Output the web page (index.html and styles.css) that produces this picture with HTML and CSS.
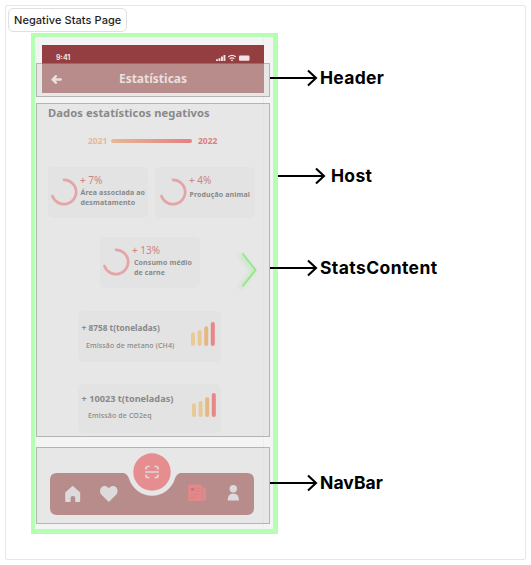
FILE: index.html
```html
<!DOCTYPE html>
<html lang="pt">
<head>
<meta charset="utf-8">
<title>Negative Stats Page</title>
<link rel="stylesheet" href="styles.css">
</head>
<body>
<svg class="defs" width="0" height="0">
  <symbol id="ring" viewBox="0 0 28 28"><path d="M14 1.8A12.200 12.200 0 1 1 2.500 18.100" fill="none" stroke="#e3a5a5" stroke-width="2.700" stroke-linecap="round"/></symbol>
  <symbol id="arrow" viewBox="0 0 48 18"><path d="M0 9H46M38 1.5L46 9L38 16.5" fill="none" stroke="#000" stroke-width="2.100"/></symbol>
  <symbol id="bars" viewBox="0 0 24 24"><g fill="none" stroke-width="4" stroke-linecap="round"><path d="M2 12.3V22" stroke="#e9ca97"/><path d="M8.6 10V22" stroke="#e8c995"/><path d="M15.2 6.3V22" stroke="#e5b783"/><path d="M21.8 2V22" stroke="#e78788"/></g></symbol>
</svg>
<main class="canvas">
  <div class="page-label">Negative Stats Page</div>
  <div class="host">
    <div class="status">
      <span>9:41</span>
      <svg width="34" height="8" viewBox="0 0 34 8" fill="#f1e3e3"><path d="M0 5.300h1.900V7H0zM2.500 4.200h1.900V7H2.500zM5 2.500h1.900V7H5zM7.500 1h1.900v6H7.500z"/><path d="M12.200 2.900Q16 -.2 19.800 2.900M13.800 4.700Q16 3 18.200 4.700" fill="none" stroke="#f1e3e3" stroke-width="1.300"/><path d="M14.600 5.700h2.800L16 7.400z"/><rect x="23" y="1.400" width="10.500" height="5.400" rx="1"/></svg>
    </div>
    <header class="zone header">
      <div class="titlebar">
        <svg width="11" height="9" viewBox="0 0 11 9"><path d="M9.800 4.500H2M5 1.200L1.500 4.500L5 7.800" fill="none" stroke="#e9dfdf" stroke-width="2.300" stroke-linecap="round" stroke-linejoin="round"/></svg>
        <h1>Estatísticas</h1>
      </div>
    </header>
    <section class="zone content">
      <h2>Dados estatísticos negativos</h2>
      <div class="years"><span class="from">2021</span><i></i><span class="to">2022</span></div>
      <div class="pair">
        <div class="card"><svg class="ring"><use href="#ring"/></svg><div><b>+ 7%</b><p>Área associada ao<br>desmatamento</p></div></div>
        <div class="card one"><svg class="ring"><use href="#ring"/></svg><div><b>+ 4%</b><p>Produção animal</p></div></div>
      </div>
      <div class="middle">
        <div class="card third"><svg class="ring"><use href="#ring"/></svg><div><b>+ 13%</b><p>Consumo médio<br>de carne</p></div></div>
        <svg class="next" width="26" height="44" viewBox="0 0 26 44"><path d="M6.500 5.500L19.500 22L6.500 38.500" fill="none" stroke="#93e58d" stroke-width="1.800"/></svg>
      </div>
      <div class="total methane"><div><strong>+ 8758 t(toneladas)</strong><p>Emissão de metano (CH4)</p></div><svg class="bars"><use href="#bars"/></svg></div>
      <div class="total carbon"><div><strong>+ 10023 t(toneladas)</strong><p>Emissão de CO2eq</p></div><svg class="bars"><use href="#bars"/></svg></div>
    </section>
    <nav class="zone nav">
      <svg width="234" height="77" viewBox="36 447 234 77">
        <path d="M57 473H122.500C126 473 128 475.500 129 478.500A24 24 0 0 0 175 478.500C176 475.500 178 473 181.500 473H247Q254 473 254 480V508Q254 515 247 515H57Q50 515 50 508V480Q50 473 57 473Z" fill="#b78c8b"/>
        <circle cx="152" cy="472" r="18.700" fill="#e68e8f"/>
        <path d="M146 469.500V468.500Q146 466.500 148 466.500H149.500M154.500 466.500H156Q158 466.500 158 468.500V469.500M146 474.500V475.500Q146 477.500 148 477.500H149.500M154.500 477.500H156Q158 477.500 158 475.500V474.500M145.200 472H158.800" fill="none" stroke="#e4d6d6" stroke-width="1.700"/>
        <path d="M65.200 492.500L72.100 486.200Q72.700 485.700 73.300 486.200L80.200 492.500V501Q80.200 502 79.200 502H75.200V497.500Q75.200 496 72.900 496Q70.600 496 70.600 497.500V502H66.200Q65.200 502 65.200 501Z" fill="#dcdadb"/>
        <path d="M108.800 502L101.500 494.800C98.800 492 100 486.500 104 486C106.500 485.800 107.900 487 108.800 488.400C109.700 487 111.200 485.800 113.600 486C117.700 486.500 118.800 492 116.100 494.800Z" fill="#dcdadb"/>
        <path d="M190 484.500H200.500Q202 484.500 202 486V501H190Q188.300 501 188.300 499.500V486Q188.300 484.500 190 484.500ZM202.600 487.500H204.500Q206 487.500 206 489V499Q206 501 204 501H202.600Z" fill="#e58788"/>
        <circle cx="192.500" cy="489.300" r="1.600" fill="#bd7779"/>
        <path d="M195.700 488.500H199.500M195.700 491.500H199.500M191 494.500H199.500M191 497.500H197" stroke="#d08284" stroke-width=".7"/>
        <circle cx="233.300" cy="488.800" r="3.700" fill="#dcdadb"/>
        <path d="M227.600 500.500Q227.600 493.500 233.300 493.500T239 500.500H227.600Z" fill="#dcdadb"/>
      </svg>
    </nav>
  </div>
  <div class="note note-header"><svg><use href="#arrow"/></svg><span>Header</span></div>
  <div class="note note-host"><svg><use href="#arrow"/></svg><span>Host</span></div>
  <div class="note note-stats"><svg><use href="#arrow"/></svg><span>StatsContent</span></div>
  <div class="note note-nav"><svg><use href="#arrow"/></svg><span>NavBar</span></div>
</main>
</body>
</html>
```

FILE: styles.css
```css
* { box-sizing: border-box; }
body { margin: 0; padding: 5px; background: #fff; font-family: "Noto Sans", sans-serif; white-space: nowrap; }
h1, h2, p { margin: 0; }
svg { display: block; flex: none; }
.defs { position: absolute; }
.canvas { position: relative; width: 521px; height: 555px; border: 1px solid #e6e6e6; border-radius: 2px; padding: 2px; }
.page-label { width: 119px; height: 24px; border: 1px solid #e0e0e0; border-radius: 5px; padding-left: 5px; font: 500 11px/22px Inter, sans-serif; letter-spacing: .07px; color: #1d1d1d; }
.host { margin: 1px 0 0 23px; width: 247px; height: 501px; border: solid #b5ffb3; border-width: 4px 5px 5px 4px; padding: 8px 0 0 1px; background: linear-gradient(#ededed, #ededed) 228px 0 / 1px 100% no-repeat #f4f4f4; }
.status { margin-left: 6px; width: 222px; height: 18px; padding: 8px 14px 0; display: flex; justify-content: space-between; align-items: center; background: #943e41; color: #f1e3e3; font: 700 7px/10px Inter, sans-serif; }
.zone { width: 234px; background: rgba(217, 217, 217, .5); outline: 1px solid rgba(0, 0, 0, .22); outline-offset: -1px; }
.header { height: 34px; }
.titlebar { margin-left: 6px; width: 222px; height: 30px; padding: 2px 0 0 9px; display: flex; align-items: center; background: #b78c8b; }
.titlebar h1 { flex: 1; text-align: center; padding-right: 20px; font-size: 12px; line-height: 16px; color: #eadfdf; }
.content { margin-top: 6px; height: 334px; padding-top: 2px; color: #898989; }
.content h2 { margin-left: 12px; font-size: 11.200px; line-height: 15px; letter-spacing: .08px; }
.years { display: flex; align-items: center; margin: 15px 0 0 52px; font-size: 8.500px; font-weight: 700; line-height: 12px; height: 12px; }
.years i { width: 81px; height: 4px; margin: 0 6px 0 4px; border-radius: 2px; background: linear-gradient(90deg, #e6b994, #e58082); }
.from { color: #e7b995; width: 19px; }
.to { color: #e27c80; }
.pair { display: flex; gap: 7px; margin: 20px 0 0 12px; }
.card { width: 100px; height: 51px; border-radius: 5px; background: #e3e3e3; display: flex; padding: 11px 0 0 2px; }
.ring { width: 28px; height: 28px; }
.card > div { margin: -4px 0 0 2px; }
.card b { display: block; font: 400 10px/12px "Noto Sans", sans-serif; color: #cf8285; }
.card p { margin: 2px 0 0 .5px; font-size: 7px; letter-spacing: .12px; font-weight: 700; line-height: 9.800px; }
.card.one { padding-left: 4px; }
.card.one p { margin-top: 4px; }
.card.third p { margin-left: 2px; }
.middle { display: flex; align-items: flex-start; margin: 19px 0 0 64px; height: 51px; }
.next { margin: 11px 0 0 36px; filter: drop-shadow(-2px 1px 2px #9ceb97); }
.total { margin-left: 41.500px; width: 143.500px; border-radius: 5px; background: #e3e3e3; display: flex; justify-content: space-between; padding: 11px 6px 0 4px; }
.total strong { display: block; font-size: 8.300px; line-height: 12px; }
.total p { margin: 7px 0 0 4.500px; font-size: 7px; letter-spacing: .13px; font-weight: 500; line-height: 10px; }
.bars { width: 24px; height: 24px; }
.methane { margin-top: 23px; height: 51px; }
.carbon { margin-top: 22px; height: 49px; padding: 9px 5px 0 4px; }
.carbon strong { font-size: 9.200px; }
.carbon p { margin: 6px 0 0 6.500px; }
.nav { margin-top: 10px; height: 77px; }
.note { position: absolute; display: flex; align-items: center; height: 22px; gap: 2px; font: 700 17.500px/22px Inter, sans-serif; letter-spacing: .3px; color: #000; }
.note svg { width: 48px; height: 18px; }
.note-header { left: 264px; top: 61px; }
.note-host { left: 272px; top: 159px; gap: 5px; }
.note-stats { left: 264px; top: 251px; letter-spacing: .4px; }
.note-nav { left: 264px; top: 466px; letter-spacing: .05px; }
```
